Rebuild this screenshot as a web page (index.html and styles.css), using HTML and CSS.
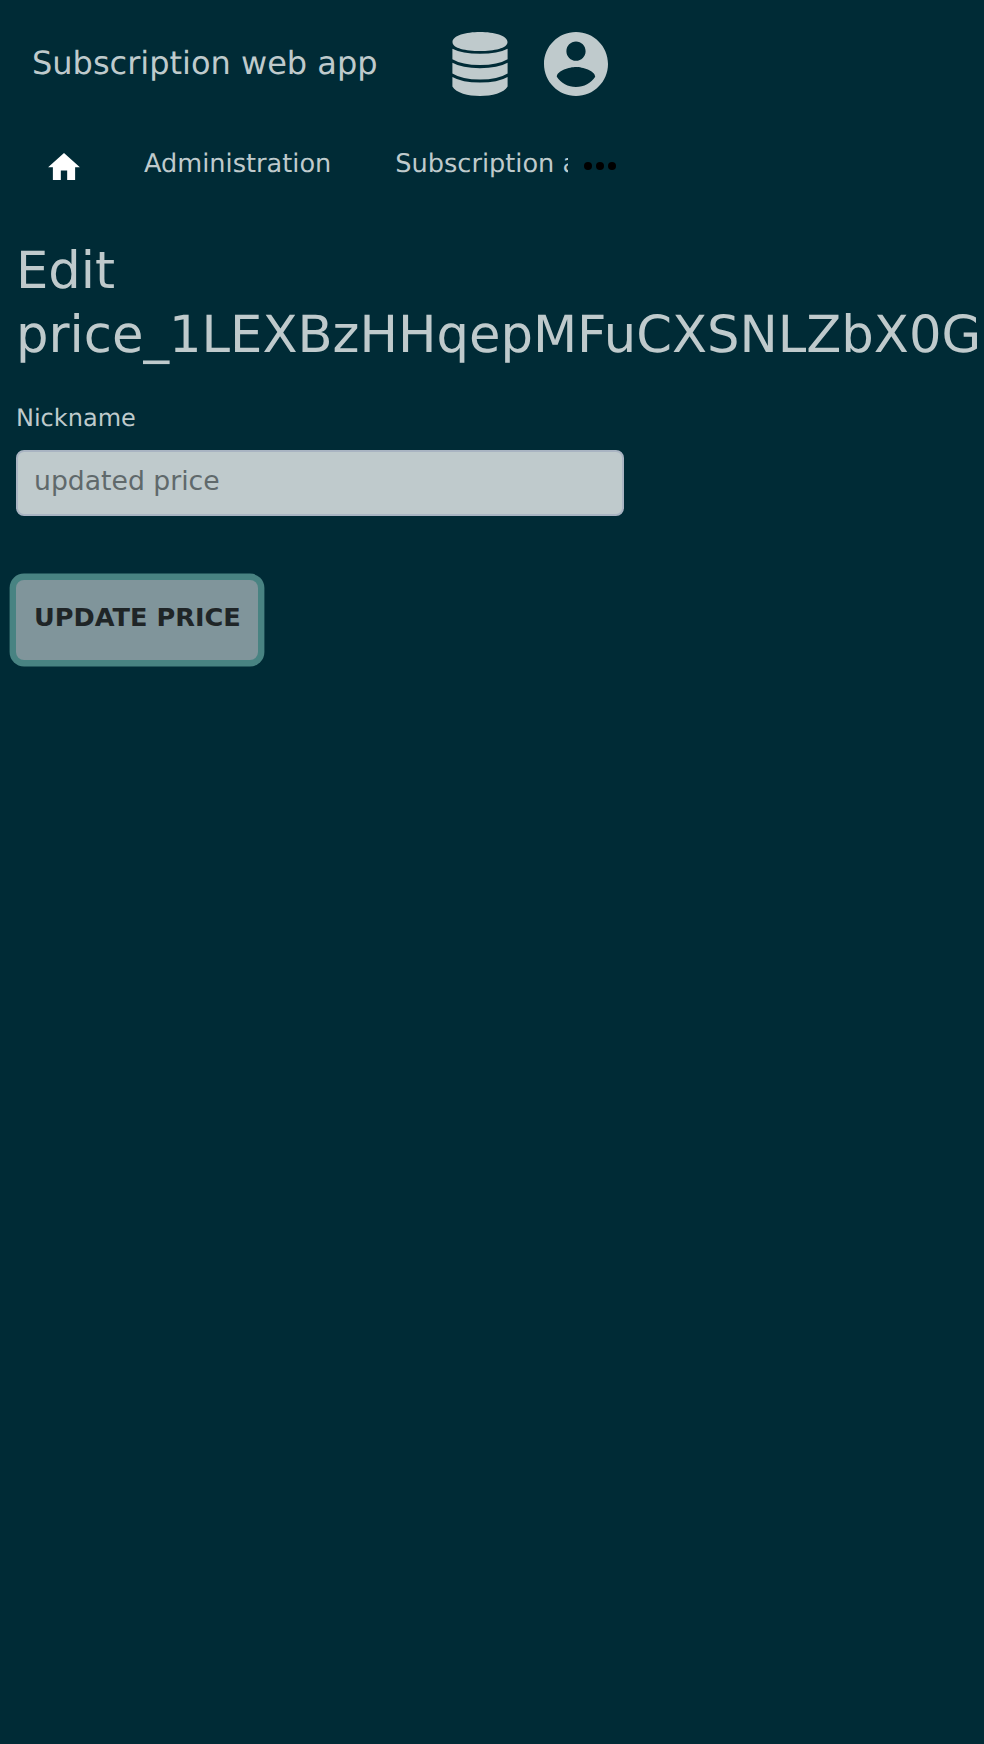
FILE: index.html
```html
<!DOCTYPE html>
<html lang="en">
<head>
<meta charset="utf-8">
<title>Subscription web app</title>
<link rel="stylesheet" href="styles.css">
</head>
<body>
<div class="app">
  <header class="header">
    <a class="brand">Subscription web app</a>
    <svg class="icon-db" viewBox="0 0 56 64"><path d="M28 0C42 0 55.500 3.500 55.500 10S42 19 28 19 .5 16.500 .5 10 14 0 28 0zM.4 16.700Q10 21.800 28 21.800T55.600 16.700V27.200Q46 33 28 33T.4 27.200zM.4 30.800Q10 36.200 28 36.200T55.600 30.800V41.500Q46 47.500 28 47.500T.4 41.500zM.4 45Q10 50.600 28 50.600T55.600 45V54.500C52 61 40 64 28 64S4 61 .4 54.500z"/></svg>
    <svg class="icon-user" viewBox="2 2 20 20"><path d="M12 2C6.480 2 2 6.480 2 12s4.480 10 10 10 10-4.480 10-10S17.520 2 12 2zm0 3c1.660 0 3 1.340 3 3s-1.340 3-3 3-3-1.340-3-3 1.340-3 3-3zm0 14.200c-2.500 0-4.710-1.280-6-3.220.03-1.990 4-3.080 6-3.080 1.990 0 5.970 1.090 6 3.080-1.290 1.940-3.500 3.220-6 3.220z"/></svg>
  </header>
  <nav class="nav">
    <svg class="icon-home" viewBox="2 3 20 17"><path d="M10 20v-6h4v6h5v-8h3L12 3 2 12h3v8z"/></svg>
    <div class="links"><a>Administration</a><a>Subscription administration</a></div>
    <svg class="icon-more" viewBox="0 0 32 8"><circle cx="4" cy="4" r="4"/><circle cx="16" cy="4" r="4"/><circle cx="28" cy="4" r="4"/></svg>
  </nav>
  <main class="main">
    <h1>Edit price_1LEXBzHHqepMFuCXSNLZbX0G</h1>
    <form>
      <label for="nickname">Nickname</label>
      <input id="nickname" type="text" placeholder="updated price">
      <button type="button">UPDATE PRICE</button>
    </form>
  </main>
</div>
</body>
</html>
```
FILE: styles.css
```css
* { box-sizing: border-box; }
body {
  margin: 0;
  min-height: 1744px;
  background: #002b36;
  color: #bfcacc;
  font-family: "DejaVu Sans", sans-serif;
  text-rendering: geometricPrecision;
  overflow: hidden;
}
.app { width: 640px; }
svg { display: block; flex: none; fill: #bfcacc; }
.header {
  display: flex;
  align-items: center;
  height: 128px;
  padding: 0 32px;
}
.brand { flex: 1; padding-bottom: 2px; font-size: 32px; line-height: 48px; }
.icon-db { width: 56px; height: 64px; margin-right: 36px; }
.icon-user { width: 64px; height: 64px; }
.nav {
  display: flex;
  align-items: center;
  height: 76px;
  padding: 0 24px 0 48px;
}
.icon-home { width: 32px; height: 27px; margin-top: 1px; fill: #fff; }
.links {
  display: flex;
  flex: 1;
  gap: 64px;
  min-width: 0;
  margin: 0 16px 5px 64px;
  overflow: hidden;
  white-space: nowrap;
  font-size: 25.6px;
  line-height: 38px;
}
.icon-more { width: 32px; height: 8px; fill: #000; }
.main { padding: 35px 16px 0; }
h1 { margin: 0; font-size: 51.2px; font-weight: 400; line-height: 64px; }
form { display: flex; flex-direction: column; align-items: flex-start; }
label { margin-top: 33px; font-size: 24px; line-height: 36px; }
input {
  width: 608px;
  height: 66px;
  margin-top: 14px;
  padding: 0 16px 5px;
  border: 2px solid #a9b4c2;
  border-radius: 8px;
  background: #bfcacc;
  font: 26.667px "DejaVu Sans", sans-serif;
}
input::placeholder { color: #60696b; opacity: 1; }
button {
  height: 80px;
  margin-top: 64px;
  padding: 0 17.5px 7px 18px;
  width: 242px;
  white-space: nowrap;
  border: 0;
  border-radius: 8px;
  background: #80959b;
  box-shadow: 0 0 0 6.4px #488382;
  color: #1f2527;
  font: bold 25.6px "DejaVu Sans", sans-serif;
}
```
